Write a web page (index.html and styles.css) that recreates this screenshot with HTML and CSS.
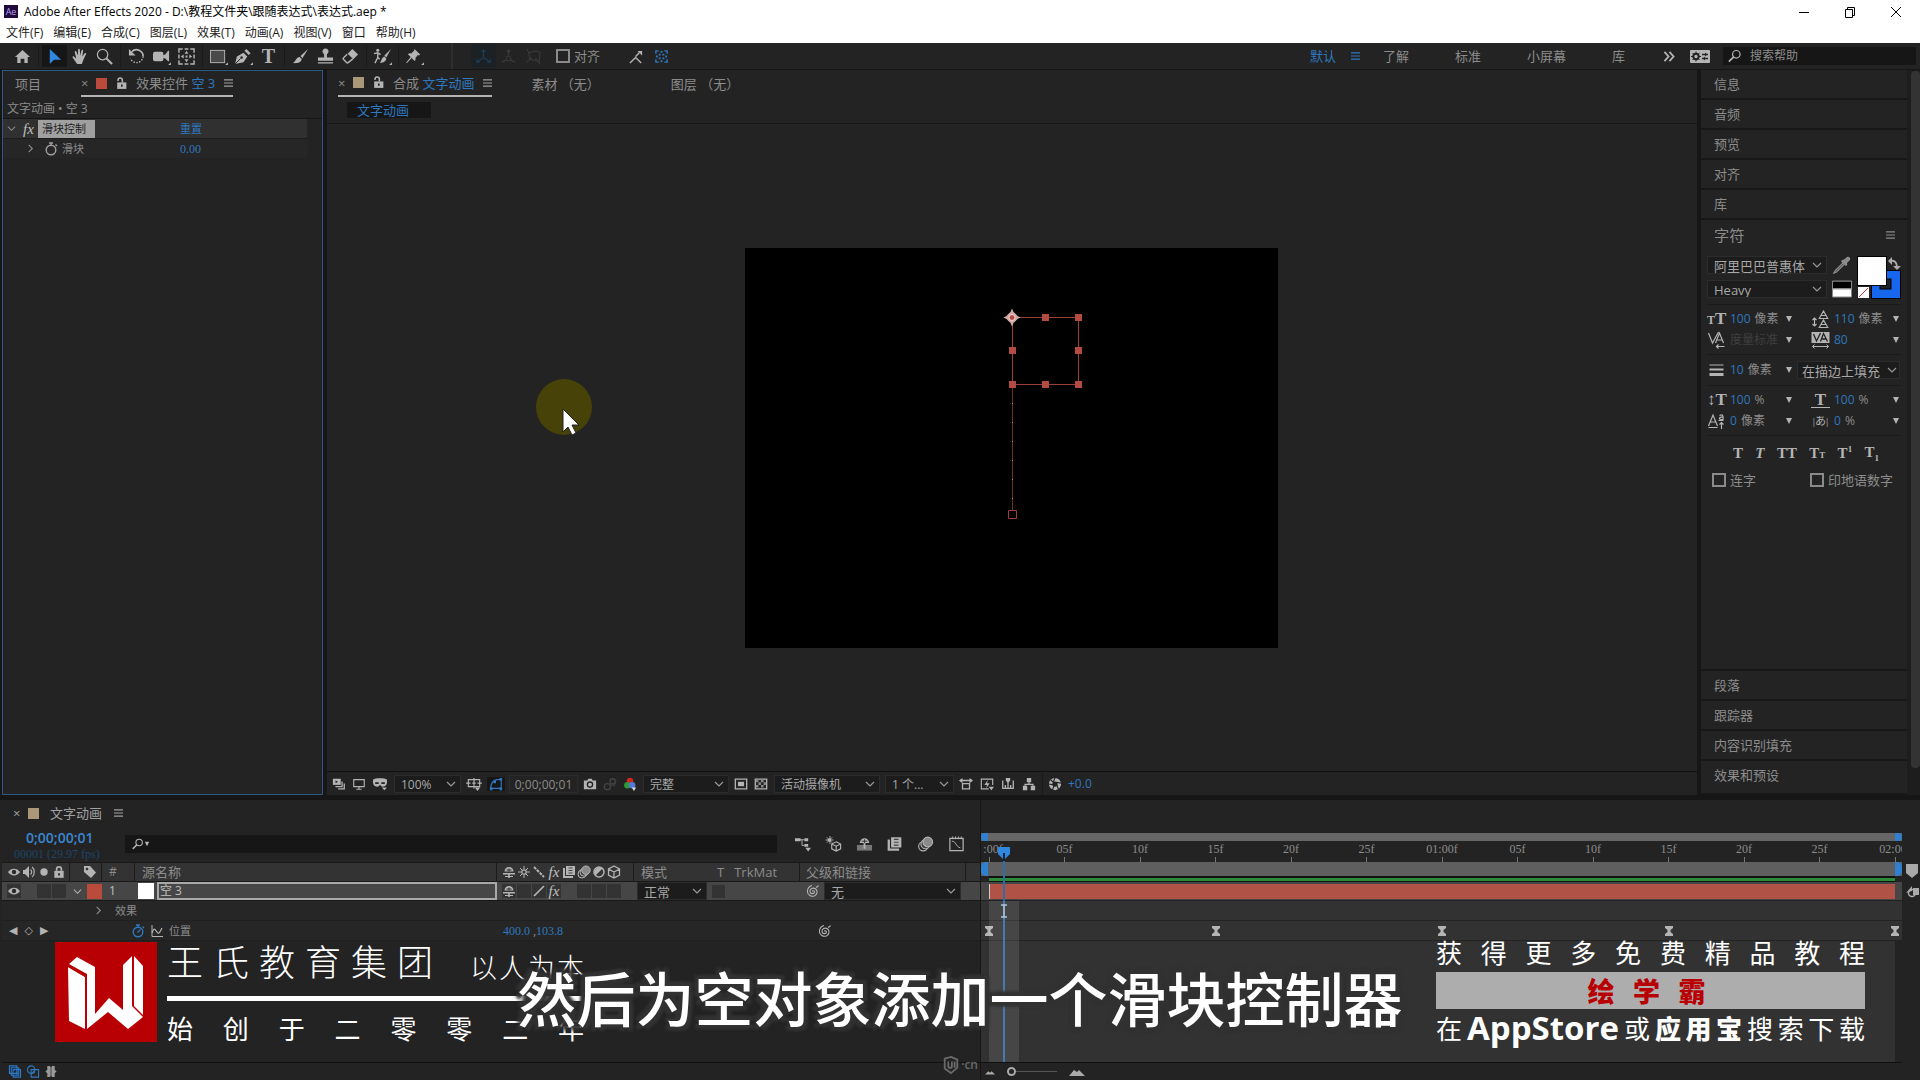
FILE: index.html
```html
<!DOCTYPE html>
<html lang="zh-CN">
<head>
    <meta charset="UTF-8">
    <meta name="viewport" content="width=device-width, initial-scale=1.0">
    <title>Adobe After Effects 2020</title>
    <link rel="stylesheet" href="styles.css">
</head>
<body>

    <!-- 图标库 -->
    <svg class="defs" width="0" height="0" aria-hidden="true">
        <symbol id="i-home" viewBox="0 0 18 18"><path d="M9 2L1 9.500h2.500V16H7v-4.500h4V16h3.500V9.500H17z" fill="currentColor"/></symbol>
        <symbol id="i-arrow" viewBox="0 0 18 18"><path d="M4 1v16l4.500-4.500H16z" fill="currentColor"/></symbol>
        <symbol id="i-hand" viewBox="0 0 18 18"><path d="M6.500 17L2 10.500c-1-1.500.2-2.300 1.300-1.300L5.500 11 4 4.500c-.3-1.500 1.400-1.800 1.800-.4L7.300 8 7.500 2c0-1.500 1.800-1.500 1.900 0l.3 6 1.300-5.200c.4-1.400 2.100-1 1.800.4L12 9l2.300-3.300c.9-1.100 2.300-.2 1.600 1l-3 6.300c-.5 1.500-1 2.500-1.400 4z" fill="currentColor"/></symbol>
        <symbol id="i-zoom" viewBox="0 0 18 18"><circle cx="7" cy="7" r="5.500" fill="none" stroke="currentColor" stroke-width="1.300"/><path d="M11 11l6 6" stroke="currentColor" stroke-width="2.200"/></symbol>
        <symbol id="i-rotate" viewBox="0 0 18 18"><path d="M4 4a7 7 0 0 1 12 5" fill="none" stroke="currentColor" stroke-width="1.800"/><path d="M16 9A7 7 0 0 1 2.500 11" fill="none" stroke="currentColor" stroke-width="1.400" stroke-dasharray="1.500 1.500"/><path d="M1 1v7h7z" fill="currentColor"/></symbol>
        <symbol id="i-video" viewBox="0 0 20 18"><rect x="1" y="4" width="11" height="10" rx="2" fill="currentColor"/><path d="M11 8l3-1 3-4h1v11h-1l-3-3-3-1zM17 18h3v-3z" fill="currentColor"/></symbol>
        <symbol id="i-panbehind" viewBox="0 0 18 18"><path d="M1 5V1h4M7 1h4M13 1h4v4M17 7v4M17 13v4h-4M11 17H7M5 17H1v-4M1 11V7" fill="none" stroke="currentColor" stroke-width="1.500"/><path d="M9 3l2 3H7zM9 15l2-3H7zM3 9l3-2v4zM15 9l-3-2v4zM8 8h2v2H8z" fill="currentColor"/></symbol>
        <symbol id="i-rect" viewBox="0 0 20 18"><rect x="1.500" y="2.500" width="15" height="13" fill="#4a4a4a" stroke="currentColor"/><path d="M17 18h3v-3z" fill="currentColor"/></symbol>
        <symbol id="i-pen" viewBox="0 0 20 18"><path d="M1 17L3 9l7-4 4 4-4 6zM11 3l2-2 4.500 4.500-2 2zM17 18h3v-3z" fill="currentColor"/><path d="M1 17l6-6" stroke="#232323"/><circle cx="8" cy="10" r="1.300" fill="#232323"/></symbol>
        <symbol id="i-brush" viewBox="0 0 18 18"><path d="M17 1L9 8.500l2 2.300zM8 9.500l2.200 2.200C10 15.500 5 16.500 1 16c2.500-1 3-6 7-6.500z" fill="currentColor"/></symbol>
        <symbol id="i-stamp" viewBox="0 0 18 18"><path d="M7.500 10V6.500a3.200 3.200 0 1 1 3 0V10H17v3.500H1V10zM1 15h16v1.500H1z" fill="currentColor"/></symbol>
        <symbol id="i-eraser" viewBox="0 0 18 18"><path d="M11 1l6 6-5 5-6-6z" fill="currentColor"/><path d="M5.500 6.500L1.500 10.500a1 1 0 0 0 0 1.500L5 15.500a1 1 0 0 0 1.500 0l5-4" fill="none" stroke="currentColor" stroke-width="1.500"/></symbol>
        <symbol id="i-roto" viewBox="0 0 20 18"><circle cx="5" cy="2.500" r="1.600" fill="currentColor"/><path d="M1 6l4-1 3 2M5 5v5l-3 6M5 10l2 2" fill="none" stroke="currentColor" stroke-width="1.500"/><path d="M19 1l-7 7 2 2zM12 9l2 2c0 3-4 5-7 4.500 2-1 2-5.500 5-6.500zM17 18h3v-3z" fill="currentColor"/></symbol>
        <symbol id="i-pin" viewBox="0 0 20 18"><path d="M10 1l6 6-1.500 1-1-.5-2.500 3c.5 1.500 0 2.500-1 3.200L7 10.500 2 16l-1-.5 5-6L3 6.500c1-1 2-1.200 3.500-.8l3-2.700zM17 18h3v-3z" fill="currentColor"/></symbol>
        <symbol id="i-axis" viewBox="0 0 18 18"><path d="M9 2v8M9 10l-7 5M9 10l7 5M7 4l2-2 2 2M2 12v3h3M16 12v3h-3" fill="none" stroke="currentColor" stroke-width="1.400"/></symbol>
        <symbol id="i-axis2" viewBox="0 0 18 18"><circle cx="9" cy="11" r="2.500" fill="none" stroke="currentColor"/><path d="M9 2v6M7 12.500L2 15M11 12.500l5 2.500M7 4l2-2 2 2" fill="none" stroke="currentColor" stroke-width="1.400"/></symbol>
        <symbol id="i-axis3" viewBox="0 0 18 18"><path d="M4 5l8-2 4 2-1 9-10-2zM2 1l2 4M16 17l-5-6M2 15l5-5" fill="none" stroke="currentColor" stroke-width="1.200"/></symbol>
        <symbol id="i-snap" viewBox="0 0 16 16"><path d="M1 15l6-6 6 6M7 8l4-4" fill="none" stroke="currentColor" stroke-width="1.500"/><path d="M9 2h5v5z" fill="currentColor"/></symbol>
        <symbol id="i-snapbox" viewBox="0 0 16 16"><path d="M2 5V2h3M11 2h3v3M14 11v3h-3M5 14H2v-3" fill="none" stroke="currentColor" stroke-width="1.500"/><path d="M7 2h2v2H7zM7 12h2v2H7zM2 7h2v2H2zM12 7h2v2h-2zM5 5h2v2H5zM9 5h2v2H9zM5 9h2v2H5zM9 9h2v2H9z" fill="currentColor"/></symbol>
        <symbol id="i-search" viewBox="0 0 16 16"><circle cx="9.500" cy="6" r="4.300" fill="none" stroke="currentColor" stroke-width="1.400"/><path d="M6.500 9L1 14.500" stroke="currentColor" stroke-width="2"/></symbol>
        <symbol id="i-menu" viewBox="0 0 10 10"><path d="M0 1.500h10M0 5h10M0 8.500h10" stroke="currentColor" stroke-width="1.300"/></symbol>
        <symbol id="i-lock" viewBox="0 0 12 12"><rect x="2" y="5" width="8" height="6" fill="currentColor"/><path d="M4 5V3.500a2 2 0 0 1 4 0V5" fill="none" stroke="currentColor" stroke-width="1.500"/><path d="M6 7v2" stroke="#232323" stroke-width="1.500"/></symbol>
        <symbol id="i-unlock" viewBox="0 0 12 12"><rect x="2" y="5" width="8.500" height="6" fill="currentColor"/><path d="M2.800 3.800V3a2 2 0 0 1 4 0v2" fill="none" stroke="currentColor" stroke-width="1.400"/><path d="M6.300 7v2" stroke="#232323" stroke-width="1.500"/></symbol>
        <symbol id="i-down" viewBox="0 0 10 10"><path d="M1 3l4 4 4-4" fill="none" stroke="currentColor" stroke-width="1.200"/></symbol>
        <symbol id="i-right" viewBox="0 0 10 10"><path d="M3 1l4 4-4 4" fill="none" stroke="currentColor" stroke-width="1.200"/></symbol>
        <symbol id="i-tri" viewBox="0 0 8 8"><path d="M1 1h6L4 7z" fill="currentColor"/></symbol>
        <symbol id="i-watch" viewBox="0 0 14 14"><circle cx="7" cy="8" r="4.800" fill="none" stroke="currentColor" stroke-width="1.400"/><path d="M5 1h4M7 1v2M11.500 2.500l1.500 1.500" stroke="currentColor" stroke-width="1.300"/></symbol>
        <symbol id="i-watch-on" viewBox="0 0 14 14"><circle cx="7" cy="8" r="4.800" fill="none" stroke="currentColor" stroke-width="1.400"/><path d="M5 1h4M7 1v2M11.500 2.500l1.500 1.500M6.500 8.500L9.500 5.500" stroke="currentColor" stroke-width="1.300"/></symbol>
        <symbol id="i-graph" viewBox="0 0 14 14"><path d="M2 1v11.500h11" fill="none" stroke="currentColor"/><path d="M2 9c2-6 3-4 5-1s3 0 5-4" fill="none" stroke="currentColor" stroke-width="1.200"/></symbol>
        <symbol id="i-spiral" viewBox="0 0 14 14"><path d="M6.500 7.500c0-1.300 2.200-1 2 .6-.3 2-4 2.200-4.500-.3-.4-3 3-4.600 5.500-3 2.600 1.800 1.800 6-1.200 7.200-3 1-6.500-.8-6.900-4.300C1.200 4.700 3.300 2 6 1.500M10 3.500c1-.5 2-1 2.500-2" fill="none" stroke="currentColor" stroke-width="1.100"/></symbol>
        <symbol id="i-eye" viewBox="0 0 14 14"><path d="M1 7c3-4.500 9-4.500 12 0-3 4.500-9 4.500-12 0z" fill="currentColor"/><circle cx="7" cy="7" r="2.200" fill="#2a2a2a"/></symbol>
        <symbol id="i-speaker" viewBox="0 0 14 14"><path d="M1 5h2l4-4v12L3 9H1z" fill="currentColor"/><path d="M8.500 4.500c1.500 1 1.500 4 0 5M10 2c3 2 3 8 0 10" fill="none" stroke="currentColor" stroke-width="1.200"/></symbol>
        <symbol id="i-dot" viewBox="0 0 14 14"><circle cx="7" cy="7" r="3.700" fill="currentColor"/></symbol>
        <symbol id="i-tag" viewBox="0 0 14 14"><path d="M1 1h6l6 6.500L8 13 1 7z" fill="currentColor"/><circle cx="4" cy="4" r="1.300" fill="#333"/></symbol>
        <symbol id="i-shy" viewBox="0 0 14 14"><path d="M2.500 6.500a4.500 4.500 0 0 1 9 0zM1 8h12v1.500H1zM6.200 8h1.600v5H6.200zM3 11h8v1H3z" fill="currentColor"/><path d="M7 3.500v3M4.500 5h5" stroke="#333"/></symbol>
        <symbol id="i-sun" viewBox="0 0 14 14"><circle cx="7" cy="7" r="2.200" fill="none" stroke="currentColor" stroke-width="1.300"/><path d="M7 1v3M7 10v3M1 7h3M10 7h3M3 3l2 2M9 9l2 2M3 11l2-2M9 5l2-2" stroke="currentColor"/></symbol>
        <symbol id="i-back" viewBox="0 0 14 14"><path d="M2 2l10 10" stroke="currentColor" stroke-width="2" stroke-dasharray="3 1"/></symbol>
        <symbol id="i-slash" viewBox="0 0 14 14"><path d="M12 2L2 12" stroke="currentColor" stroke-width="1.700"/></symbol>
        <symbol id="i-film" viewBox="0 0 14 14"><path d="M1 3h2v8h8v2H1zM4 1h9v9H4z" fill="currentColor"/><path d="M6.500 3h4M6.500 5.500h4M6.500 8h4" stroke="#444"/></symbol>
        <symbol id="i-blur" viewBox="0 0 14 14"><circle cx="5" cy="9" r="4" fill="none" stroke="currentColor"/><circle cx="7" cy="7.200" r="4" fill="#444" stroke="currentColor"/><circle cx="9" cy="5.200" r="4.200" fill="#8a8a8a" stroke="currentColor"/></symbol>
        <symbol id="i-adj" viewBox="0 0 14 14"><circle cx="7" cy="7" r="5" fill="none" stroke="currentColor" stroke-width="1.500"/><path d="M3.500 10.500l7-7A5 5 0 0 0 3.500 10.500z" fill="currentColor"/></symbol>
        <symbol id="i-cube" viewBox="0 0 14 14"><path d="M7 1l5.500 3v6L7 13l-5.500-3V4zM1.500 4L7 7l5.500-3M7 7v6" fill="none" stroke="currentColor" stroke-width="1.300"/></symbol>
        <symbol id="i-flow" viewBox="0 0 18 16"><path d="M1 2h6v3H1zM11 2h4v3h-4zM11 8h4v3h-4zM12 12h6l-3 4z" fill="currentColor"/><path d="M6 3.500h5M8.500 3.500v6H11" fill="none" stroke="currentColor"/></symbol>
        <symbol id="i-draft" viewBox="0 0 18 18"><path d="M5 0v9M0 4.500h9M1.500 1.500l6 6M7.500 1.500l-6 6" stroke="currentColor"/><circle cx="4.500" cy="4.500" r="2" fill="currentColor"/><path d="M12 6.500l5 2.500v5.500L12 17l-5-2.500V9zM7 9l5 2.500L17 9M12 11.500V17" fill="none" stroke="currentColor" stroke-width="1.300"/></symbol>
        <symbol id="i-shybig" viewBox="0 0 18 16"><path d="M4 7a5 5 0 0 1 10 0z" fill="currentColor"/><path d="M1 9h16v6H1z" fill="#777"/><path d="M8 7h2v6H8z" fill="currentColor"/><path d="M9 3v4M6 5h6" stroke="#333"/></symbol>
        <symbol id="i-grapheditor" viewBox="0 0 18 16"><path d="M2 2h14v13H2z" fill="none" stroke="currentColor" stroke-width="1.300"/><path d="M5 0v3M8 0v3M11 0v3M14 0v3M4 5c5 0 4 6 9 7" fill="none" stroke="currentColor"/></symbol>
        <symbol id="i-stack" viewBox="0 0 16 16"><path d="M1 2h9v7H1z" fill="currentColor"/><path d="M4 4l3 1.500L4 7z" fill="#232323"/><path d="M11.500 5v6H4M14 7.500v6H7" fill="none" stroke="currentColor" stroke-width="1.500"/></symbol>
        <symbol id="i-monitor" viewBox="0 0 16 16"><path d="M2 3h12v8H2zM8 11v3M5 14h6" fill="none" stroke="currentColor" stroke-width="1.300"/></symbol>
        <symbol id="i-mask" viewBox="0 0 18 16"><path d="M1 3c3-2 13-2 16 0v3c0 3-2 5-4.500 5C10 11 10 9 9 9s-1 2-3.500 2C3 11 1 9 1 6zM11 12h6l-3 3z" fill="currentColor"/><path d="M3.500 6h4v2h-4zM10.500 6h4v2h-4z" fill="#232323"/></symbol>
        <symbol id="i-grid" viewBox="0 0 18 16"><path d="M2.500 3h13v8h-13zM9 1v4M9 9v4M0 7h5M13 7h5M7 7h4M9 5v4" fill="none" stroke="currentColor" stroke-width="1.300"/><path d="M10 12h6l-3 4z" fill="currentColor"/></symbol>
        <symbol id="i-maskpath" viewBox="0 0 16 16"><path d="M2 13c0-5 2-9 7-10h5v10z" fill="none" stroke="currentColor" stroke-width="1.300"/><path d="M1 12h3v3H1zM12 12h3v3h-3zM12 1h3v3h-3zM5 4h3v3H5z" fill="currentColor"/></symbol>
        <symbol id="i-camera" viewBox="0 0 16 16"><path d="M1 4h4l1-2h4l1 2h4v10H1z" fill="currentColor"/><circle cx="8" cy="8.700" r="3" fill="none" stroke="#232323" stroke-width="1.500"/></symbol>
        <symbol id="i-show" viewBox="0 0 16 16"><circle cx="5" cy="11" r="3.500" fill="none" stroke="currentColor" stroke-width="1.500"/><circle cx="11" cy="5" r="3" fill="none" stroke="currentColor" stroke-width="1.500"/><path d="M8 9l5 1 2-6" fill="none" stroke="currentColor"/></symbol>
        <symbol id="i-rgb" viewBox="0 0 16 16"><circle cx="8" cy="4.500" r="3.700" fill="#d0281c"/><circle cx="5" cy="9.500" r="3.700" fill="#2f9a3a"/><circle cx="10.500" cy="9.500" r="3.700" fill="#5578d8"/><path d="M10 12h5l-2.500 4z" fill="#ddd"/></symbol>
        <symbol id="i-roi" viewBox="0 0 16 16"><path d="M1.500 2.500h13v11h-13z" fill="none" stroke="currentColor" stroke-width="1.500"/><path d="M4.500 5.500h7v5h-7z" fill="currentColor"/></symbol>
        <symbol id="i-checker" viewBox="0 0 16 16"><path d="M1.500 2.500h13v11h-13z" fill="none" stroke="currentColor" stroke-width="1.500"/><path d="M2 3h3v3H2zM8 3h3v3H8zM5 6h3v3H5zM11 6h3v3h-3zM2 9h3v3H2zM8 9h3v3H8z" fill="#888"/></symbol>
        <symbol id="i-aspect" viewBox="0 0 16 16"><path d="M1 4h14M4 7.500h8v6H4z" fill="none" stroke="currentColor" stroke-width="1.500"/><path d="M0 4l4-3v6zM16 4l-4-3v6z" fill="currentColor"/></symbol>
        <symbol id="i-fast" viewBox="0 0 16 16"><path d="M10 13.500H1.500v-11h13V9" fill="none" stroke="currentColor" stroke-width="1.300"/><path d="M9 3L5 9h3l-1 4 4-6H8zM10 11h6l-3 4z" fill="currentColor"/></symbol>
        <symbol id="i-tlbtn" viewBox="0 0 16 16"><path d="M2 4v9h12V4M5 13V9M11 13V9M8 13V6" fill="none" stroke="currentColor" stroke-width="1.500"/><path d="M5.500 1h5v3L8 7 5.500 4z" fill="currentColor"/></symbol>
        <symbol id="i-flowchart" viewBox="0 0 16 16"><path d="M5.500 1h5v5h-5zM1 10h5v5H1zM10 10h5v5h-5z" fill="currentColor"/><path d="M8 6v2.500M3.500 10V8.500h9V10" fill="none" stroke="currentColor" stroke-width="1.500"/></symbol>
        <symbol id="i-aperture" viewBox="0 0 16 16"><circle cx="8" cy="8" r="5" fill="none" stroke="currentColor" stroke-width="4"/><path d="M8 1l-2 5M15 7l-6-1M12 14l-2-5M5 15l2-5M1 8l5 1M3 3l3 3" stroke="#232323" stroke-width="1.300"/></symbol>
        <symbol id="i-dropper" viewBox="0 0 18 18"><path d="M11 6l-8.500 8.500L1 17l2.500-1L12 7.500" fill="none" stroke="currentColor" stroke-width="1.300"/><path d="M9 4l2-.5L14 1c2-1 4 1 3 3l-3 3 .3 2-1.500 1L8 5.500z" fill="currentColor"/></symbol>
        <symbol id="i-keyframe" viewBox="0 0 10 10"><path d="M1 0h8v2L6.500 4v2L9 8v2H1V8l2.500-2V4L1 2z" fill="#b4b4b4"/></symbol>
        <symbol id="i-layers" viewBox="0 0 14 14"><path d="M1 1h8v8H1zM3 3h8v8H3zM5 5h8v8H5z" fill="#16263a" stroke="currentColor" stroke-width="1.200"/><path d="M9 7v4M7 9h4" stroke="currentColor"/></symbol>
        <symbol id="i-modes" viewBox="0 0 14 14"><circle cx="5" cy="5" r="4" fill="none" stroke="currentColor" stroke-width="1.200"/><path d="M5 5h8v8H5z" fill="none" stroke="currentColor" stroke-width="1.200"/><path d="M9 5v4H5z" fill="currentColor"/></symbol>
        <symbol id="i-brackets" viewBox="0 0 14 14"><path d="M6 1H3v4L1 7l2 2v4h3zM8 1h3v4l2 2-2 2v4H8z" fill="currentColor"/><path d="M7 2v10" stroke="#777" stroke-width="2"/></symbol>
    </svg>

    <header class="titlebar">
        <span class="app-logo">Ae</span>
        <span class="app-title">Adobe After Effects 2020 - D:\教程文件夹\跟随表达式\表达式.aep *</span>
        <div class="win-buttons">
            <button type="button" aria-label="最小化"><svg viewBox="0 0 12 12"><path d="M1 6.500h10" stroke="#000"/></svg></button>
            <button type="button" aria-label="还原"><svg viewBox="0 0 12 12"><path d="M1.500 3.500h7v8h-7zM3.500 3.500v-2h7v8h-2" fill="none" stroke="#000"/></svg></button>
            <button type="button" aria-label="关闭"><svg viewBox="0 0 12 12"><path d="M1 1l10 10M11 1L1 11" stroke="#000"/></svg></button>
        </div>
    </header>

    <nav class="menubar">
        <a href="#">文件(F)</a><a href="#">编辑(E)</a><a href="#">合成(C)</a><a href="#">图层(L)</a><a href="#">效果(T)</a><a href="#">动画(A)</a><a href="#">视图(V)</a><a href="#">窗口</a><a href="#">帮助(H)</a>
    </nav>

    <!-- 工具栏 -->
    <div class="toolbar">
        <button type="button" class="tool" aria-label="主页"><svg><use href="#i-home"/></svg></button>
        <i class="sep"></i>
        <button type="button" class="tool active" aria-label="选取"><svg><use href="#i-arrow"/></svg></button>
        <button type="button" class="tool" aria-label="手形"><svg><use href="#i-hand"/></svg></button>
        <button type="button" class="tool" aria-label="缩放"><svg><use href="#i-zoom"/></svg></button>
        <i class="sep"></i>
        <button type="button" class="tool" aria-label="旋转"><svg><use href="#i-rotate"/></svg></button>
        <button type="button" class="tool" aria-label="摄像机"><svg><use href="#i-video"/></svg></button>
        <button type="button" class="tool" aria-label="锚点"><svg><use href="#i-panbehind"/></svg></button>
        <i class="sep"></i>
        <button type="button" class="tool" aria-label="矩形"><svg><use href="#i-rect"/></svg></button>
        <button type="button" class="tool" aria-label="钢笔"><svg><use href="#i-pen"/></svg></button>
        <button type="button" class="tool type-tool" aria-label="文字">T</button>
        <i class="sep"></i>
        <button type="button" class="tool" aria-label="画笔"><svg><use href="#i-brush"/></svg></button>
        <button type="button" class="tool" aria-label="仿制图章"><svg><use href="#i-stamp"/></svg></button>
        <button type="button" class="tool" aria-label="橡皮擦"><svg><use href="#i-eraser"/></svg></button>
        <i class="sep"></i>
        <button type="button" class="tool" aria-label="Roto 笔刷"><svg><use href="#i-roto"/></svg></button>
        <i class="sep"></i>
        <button type="button" class="tool" aria-label="人偶位置控点"><svg><use href="#i-pin"/></svg></button>
        <div class="axis-tools">
            <button type="button" class="tool on" aria-label="本地轴" disabled><svg><use href="#i-axis"/></svg></button>
            <button type="button" class="tool" aria-label="世界轴" disabled><svg><use href="#i-axis2"/></svg></button>
            <button type="button" class="tool" aria-label="视图轴" disabled><svg><use href="#i-axis3"/></svg></button>
        </div>
        <label class="check snap"><input type="checkbox">对齐</label>
        <button type="button" class="tool small" aria-label="对齐边缘"><svg><use href="#i-snap"/></svg></button>
        <button type="button" class="tool small blue" aria-label="对齐特征"><svg><use href="#i-snapbox"/></svg></button>

        <div class="workspaces">
            <a href="#" class="current">默认 <svg class="menu-icon"><use href="#i-menu"/></svg></a>
            <a href="#">了解</a>
            <a href="#">标准</a>
            <a href="#">小屏幕</a>
            <a href="#">库</a>
        </div>
        <button type="button" class="more" aria-label="更多"><svg viewBox="0 0 12 12"><path d="M1 1l4.500 5L1 11M6.500 1L11 6l-4.500 5" fill="none" stroke="currentColor" stroke-width="2"/></svg></button>
        <button type="button" class="sync" aria-label="同步设置"><svg viewBox="0 0 20 13"><rect width="20" height="13" rx="1" fill="#b4b4b4"/><circle cx="6" cy="6.500" r="2.700" fill="none" stroke="#232323" stroke-width="2"/><path d="M6 1.500v10M1 6.500h10M2.500 3l7 7M9.500 3l-7 7" stroke="#232323" stroke-dasharray="2 6"/><path d="M12 4.500h6M12 8.500h6" stroke="#232323" stroke-width="1.500"/><path d="M13 8.500l2-2v4zM17 4.500l-2-2v4z" fill="#232323"/></svg></button>
        <label class="help-search"><svg><use href="#i-search"/></svg><input type="text" placeholder="搜索帮助" aria-label="搜索帮助"></label>
    </div>

    <main class="workspace">

        <!-- 效果控件 -->
        <section class="panel effects">
            <div class="tabs">
                <a href="#" class="tab project-tab">项目</a>
                <div class="tab current">
                    <span class="close">×</span><i class="swatch red"></i><svg class="lock"><use href="#i-unlock"/></svg>
                    <span>效果控件 <b>空 3</b></span><svg class="menu-icon"><use href="#i-menu"/></svg>
                </div>
            </div>
            <p class="crumb">文字动画 • 空 3</p>
            <div class="effect-row head">
                <svg class="tw"><use href="#i-down"/></svg><span class="fx">fx</span><span class="effect-name">滑块控制</span>
                <button type="button" class="value">重置</button>
            </div>
            <div class="effect-row prop">
                <svg class="tw"><use href="#i-right"/></svg><svg class="watch"><use href="#i-watch"/></svg><span>滑块</span>
                <button type="button" class="value">0.00</button>
            </div>
        </section>

        <!-- 合成查看器 -->
        <section class="panel viewer">
            <div class="tabs">
                <div class="tab current">
                    <span class="close">×</span><i class="swatch tan"></i><svg class="lock"><use href="#i-unlock"/></svg>
                    <span>合成 <b>文字动画</b></span><svg class="menu-icon"><use href="#i-menu"/></svg>
                </div>
                <a href="#" class="tab">素材 （无）</a>
                <a href="#" class="tab">图层 （无）</a>
            </div>
            <div class="comp-path"><a href="#">文字动画</a></div>
            <div class="stage">
                <svg class="comp" viewBox="0 0 533 400">
                    <rect width="533" height="400" fill="#000"/>
                    <g fill="none" stroke="#9c4038">
                        <path d="M267.500 69.500h66v67h-66z"/>
                        <path d="M267.500 136v126" stroke="#6e2f2a"/>
                        <path d="M263.500 262.500h8v8h-8z"/>
                    </g>
                    <path d="M267.500 136v130" stroke="#b09090" stroke-dasharray="1 18"/>
                    <g fill="#b34b41">
                        <path d="M297 66h7v7h-7zM330 66h7v7h-7zM264 99h7v7h-7zM330 99h7v7h-7zM264 133h7v7h-7zM297 133h7v7h-7zM330 133h7v7h-7z"/>
                    </g>
                    <path d="M267 60.500l1.500 3.500 4 4 3 1.500-3 1.500-4 4-1.500 3.500-1.500-3.500-4-4-3-1.500 3-1.500 4-4z" fill="#d0a8a4"/>
                    <circle cx="267" cy="69.500" r="5" fill="#d0a8a4"/>
                    <circle cx="267" cy="69.500" r="3" fill="#b34b41" stroke="#f0dcda"/>
                </svg>
                <svg class="cursor" viewBox="0 0 60 60">
                    <circle cx="31" cy="31" r="28" fill="#464208"/>
                    <path d="M30 33v23l5-5 4 8 4-2-4-8h7z" fill="#fff" stroke="#222"/>
                </svg>
            </div>
            <div class="viewer-bar">
                <svg><use href="#i-stack"/></svg>
                <svg><use href="#i-monitor"/></svg>
                <svg class="wide"><use href="#i-mask"/></svg>
                <select class="s-zoom" aria-label="放大率"><option>100%</option></select>
                <svg class="wide"><use href="#i-grid"/></svg>
                <svg class="wide blue"><use href="#i-maskpath"/></svg>
                <button type="button" class="timecode">0;00;00;01</button>
                <svg><use href="#i-camera"/></svg>
                <svg class="dim"><use href="#i-show"/></svg>
                <svg><use href="#i-rgb"/></svg>
                <select class="s-res" aria-label="分辨率"><option>完整</option></select>
                <svg><use href="#i-roi"/></svg>
                <svg><use href="#i-checker"/></svg>
                <select class="s-cam" aria-label="视图"><option>活动摄像机</option></select>
                <select class="s-view" aria-label="视图布局"><option>1 个...</option></select>
                <svg><use href="#i-aspect"/></svg>
                <svg><use href="#i-fast"/></svg>
                <svg><use href="#i-tlbtn"/></svg>
                <svg><use href="#i-flowchart"/></svg>
                <i class="sep"></i>
                <svg><use href="#i-aperture"/></svg>
                <button type="button" class="value">+0.0</button>
            </div>
        </section>

        <!-- 右侧面板 -->
        <aside class="side">
            <div class="side-list">
                <a href="#" class="side-item">信息</a>
                <a href="#" class="side-item">音频</a>
                <a href="#" class="side-item">预览</a>
                <a href="#" class="side-item">对齐</a>
                <a href="#" class="side-item">库</a>
                <div class="character">
                    <h3>字符 <svg class="menu-icon"><use href="#i-menu"/></svg></h3>
                    <div class="font-row">
                        <div class="font-selects">
                            <select aria-label="字体"><option>阿里巴巴普惠体</option></select>
                            <select aria-label="字体样式"><option>Heavy</option></select>
                        </div>
                        <div class="font-icons">
                            <svg><use href="#i-dropper"/></svg>
                            <svg viewBox="0 0 20 17"><path d="M.5.500h19v16H.5z" fill="#fff" stroke="#888"/><path d="M1 1h18v7H1z"/><path d="M0 8.500h20" stroke="#999"/></svg>
                        </div>
                        <svg class="colors" viewBox="0 0 44 43">
                            <rect x="14.500" y="14.500" width="29" height="28" fill="#1766ee" stroke="#000"/>
                            <rect x="23" y="23" width="11" height="10" fill="#222" stroke="#000"/>
                            <rect x=".5" y=".5" width="29" height="29" fill="#fff" stroke="#000"/>
                            <rect x="1" y="31" width="11" height="11" fill="#fff"/>
                            <path d="M2 41l9-9" stroke="#e04040"/>
                            <path d="M33 5c4-1 7 1 7 6" fill="none" stroke="#aaa" stroke-width="2"/><path d="M35 1v8l-4-4zM36 10h8l-4 4z" fill="#aaa"/>
                        </svg>
                    </div>
                    <div class="char-grid">
                        <div class="field"><span class="glyph"><small>T</small>T</span><button type="button" class="value">100</button> 像素<svg class="tri"><use href="#i-tri"/></svg></div>
                        <div class="field"><svg class="pic" viewBox="0 0 18 18"><path d="M3 8v8M1 10l2-2 2 2M1 14l2 2 2-2M7 8.500h10M7 17.500h10M8 8l4-7 4 7M9.500 5.500h5M8 17l4-7 4 7M9.500 14.500h5" fill="none" stroke="currentColor" stroke-width="1.200"/></svg><button type="button" class="value">110</button> 像素<svg class="tri"><use href="#i-tri"/></svg></div>
                        <div class="field"><svg class="pic" viewBox="0 0 18 18"><path d="M1 2l4 10 6-11M8 12l4-10 4 10M9.500 9h5M9 15.500h8M11 13.500l-2 2 2 2" fill="none" stroke="currentColor" stroke-width="1.200"/></svg><span class="off">度量标准</span><svg class="tri"><use href="#i-tri"/></svg></div>
                        <div class="field"><svg class="pic" viewBox="0 0 18 18"><path d="M0 1h18v11H0z" fill="currentColor"/><path d="M2 3l3 7 4-8M9 10.500l3-8 4 8M10.500 8h4" fill="none" stroke="#222" stroke-width="1.300"/><path d="M1 15.500h16M3 13.500l-2 2 2 2M15 13.500l2 2-2 2" fill="none" stroke="currentColor"/></svg><button type="button" class="value">80</button><svg class="tri"><use href="#i-tri"/></svg></div>
                    </div>
                    <div class="char-grid stroke">
                        <div class="field"><svg class="pic" viewBox="0 0 18 18"><path d="M2 4h14" stroke="currentColor"/><path d="M2 8.500h14" stroke="currentColor" stroke-width="2"/><path d="M2 13.500h14" stroke="currentColor" stroke-width="3"/></svg><button type="button" class="value">10</button> 像素<svg class="tri"><use href="#i-tri"/></svg></div>
                        <select aria-label="描边方式"><option>在描边上填充</option></select>
                    </div>
                    <div class="char-grid">
                        <div class="field"><span class="glyph">↕T</span><button type="button" class="value">100</button> %<svg class="tri"><use href="#i-tri"/></svg></div>
                        <div class="field"><span class="glyph under">T</span><button type="button" class="value">100</button> %<svg class="tri"><use href="#i-tri"/></svg></div>
                        <div class="field"><svg class="pic" viewBox="0 0 18 18"><path d="M1 14L5.500 3 10 14M2.500 10h6M1 15.500h9M11 8.500h5M14 17v-6M12 12.500l2-2 2 2M12 3.500c3-1.500 4 0 3.500 4-3 .5-4-.5-3.500-1.500s2-1 3.500-.8" fill="none" stroke="currentColor" stroke-width="1.200"/></svg><button type="button" class="value">0</button> 像素<svg class="tri"><use href="#i-tri"/></svg></div>
                        <div class="field"><span class="glyph tsume">|あ|</span><button type="button" class="value">0</button> %<svg class="tri"><use href="#i-tri"/></svg></div>
                    </div>
                    <div class="faux">
                        <button type="button"><b>T</b></button><button type="button"><em>T</em></button><button type="button">TT</button><button type="button">T<small>T</small></button><button type="button">T<sup>1</sup></button><button type="button">T<sub>1</sub></button>
                    </div>
                    <div class="char-checks">
                        <label class="check"><input type="checkbox">连字</label>
                        <label class="check"><input type="checkbox">印地语数字</label>
                    </div>
                </div>
                <a href="#" class="side-item">段落</a>
                <a href="#" class="side-item">跟踪器</a>
                <a href="#" class="side-item">内容识别填充</a>
                <a href="#" class="side-item">效果和预设</a>
            </div>
            <div class="scrollbar"><i></i></div>
        </aside>
    </main>

    <!-- 时间轴 -->
    <section class="timeline">
        <div class="layers">
            <div class="tl-tab">
                <span class="close">×</span><i class="swatch tan"></i><span>文字动画</span><svg class="menu-icon"><use href="#i-menu"/></svg>
            </div>
            <div class="tl-top">
                <div class="now"><strong>0;00;00;01</strong><span>00001 (29.97 fps)</span></div>
                <label class="tl-search"><svg><use href="#i-search"/></svg><svg class="tri"><use href="#i-tri"/></svg><input type="text" aria-label="搜索图层"></label>
                <div class="tl-buttons">
                    <svg><use href="#i-flow"/></svg>
                    <svg><use href="#i-draft"/></svg>
                    <svg><use href="#i-shybig"/></svg>
                    <svg><use href="#i-film"/></svg>
                    <svg><use href="#i-blur"/></svg>
                    <svg><use href="#i-grapheditor"/></svg>
                </div>
            </div>
            <div class="row head">
                <div class="av"><svg><use href="#i-eye"/></svg><svg><use href="#i-speaker"/></svg><svg><use href="#i-dot"/></svg><svg><use href="#i-lock"/></svg></div>
                <div class="label"><svg><use href="#i-tag"/></svg></div>
                <div class="num">#</div>
                <div class="name">源名称</div>
                <div class="switches"><svg><use href="#i-shy"/></svg><svg><use href="#i-sun"/></svg><svg><use href="#i-back"/></svg><span class="fx">fx</span><svg><use href="#i-film"/></svg><svg><use href="#i-blur"/></svg><svg><use href="#i-adj"/></svg><svg><use href="#i-cube"/></svg></div>
                <div class="mode"><span>模式</span><span>T</span><span>TrkMat</span></div>
                <div class="parent">父级和链接</div>
            </div>
            <div class="row layer">
                <div class="av"><svg class="cell"><use href="#i-eye"/></svg><i></i><i class="cell"></i><i class="cell"></i></div>
                <div class="label"><svg class="tw"><use href="#i-down"/></svg><i class="swatch red"></i></div>
                <div class="num">1</div>
                <div class="name"><i class="solid"></i><input type="text" value="空 3" aria-label="图层名称"></div>
                <div class="switches"><svg class="cell"><use href="#i-shy"/></svg><i class="cell"></i><svg class="cell"><use href="#i-slash"/></svg><span class="fx cell">fx</span><i></i><i class="cell"></i><i class="cell"></i><i class="cell"></i></div>
                <div class="mode"><select aria-label="模式"><option>正常</option></select><i class="cell"></i></div>
                <div class="parent"><svg><use href="#i-spiral"/></svg><select aria-label="父级"><option>无</option></select></div>
            </div>
            <div class="row sub effect-group">
                <svg class="tw"><use href="#i-right"/></svg><span>效果</span>
            </div>
            <div class="row sub">
                <div class="keys"><span>◀</span><span>◇</span><span>▶</span></div>
                <div class="prop-name"><svg class="blue"><use href="#i-watch-on"/></svg><svg><use href="#i-graph"/></svg><span>位置</span></div>
                <div class="position"><button type="button" class="value">400.0</button> ,<button type="button" class="value">103.8</button></div>
                <div></div>
                <div class="pick"><svg><use href="#i-spiral"/></svg></div>
            </div>
            <div class="rest"></div>
            <div class="tl-bottom">
                <div class="toggles"><svg><use href="#i-layers"/></svg><svg><use href="#i-modes"/></svg><svg class="grey"><use href="#i-brackets"/></svg></div>
                <span class="site"><svg viewBox="0 0 20 20"><path d="M3 3l7-2 7 3v9l-7 6-7-5z" fill="none" stroke="currentColor" stroke-width="2"/><path d="M7 6v5c0 3 4 3 4 0V6M14 6v7" fill="none" stroke="currentColor" stroke-width="2"/></svg>·cn</span>
            </div>
        </div>

        <div class="tracks">
            <div class="navigator"><i></i><i></i></div>
            <div class="ruler">
                <div class="ticks">
                    <span>:00f</span><span>05f</span><span>10f</span><span>15f</span><span>20f</span><span>25f</span><span>01:00f</span><span>05f</span><span>10f</span><span>15f</span><span>20f</span><span>25f</span><span>02:00f</span>
                </div>
            </div>
            <div class="workarea"><i></i><i></i></div>
            <div class="cache"></div>
            <div class="track bar-track"><div class="bar"></div></div>
            <div class="track"></div>
            <div class="track keyframes">
                <svg><use href="#i-keyframe"/></svg><svg><use href="#i-keyframe"/></svg><svg><use href="#i-keyframe"/></svg><svg><use href="#i-keyframe"/></svg><svg><use href="#i-keyframe"/></svg>
            </div>
            <div class="track-rest"></div>
            <div class="zoom-bar">
                <svg viewBox="0 0 12 8"><path d="M0 7l4-4 2 2 2-2 4 4z" fill="#aaa"/></svg>
                <input type="range" min="0" max="100" value="0" aria-label="时间轴缩放">
                <svg class="big" viewBox="0 0 16 10"><path d="M0 9l5-6 3 2 2-2 6 6z" fill="#aaa"/></svg>
            </div>
            <div class="playhead">
                <svg viewBox="0 0 12 14"><path d="M0 0h12v7l-6 6-6-6z" fill="#2f87e0"/><path d="M6 6v8" stroke="#123" stroke-width="2"/></svg>
                <svg class="ibeam" viewBox="0 0 12 14"><path d="M3 1h6M6 1v12M3 13h6" fill="none" stroke="#a8c0d8" stroke-width="1.500"/></svg>
            </div>
        </div>

        <div class="gutter">
            <svg viewBox="0 0 14 16"><path d="M1 1h12v9l-6 5-6-5z" fill="#aaa"/></svg>
            <svg viewBox="0 0 14 16"><circle cx="7" cy="9" r="3.500" fill="none" stroke="#aaa" stroke-width="1.500"/><path d="M8 4h6v7H8zM1 9l6-7v5z" fill="#aaa"/></svg>
        </div>
    </section>

    <!-- 角标与字幕 -->
    <div class="brand">
        <svg class="brand-logo" viewBox="0 0 102 100">
            <rect width="102" height="100" fill="#b80004"/>
            <path d="M14 22l8-7 18 10v47l14-16 14 12V23l9-9v50l11 11-15 12-20-17-21 17V32z" fill="#fff"/>
            <path d="M13 25l17 10v52l-16-8z" fill="#fff"/>
            <path d="M13 24l18 10.500V87M78 13v50l11 11" fill="none" stroke="#b80004" stroke-width="1.500"/>
            <path d="M79 14l9 10v49l-9-9z" fill="#fff"/>
        </svg>
        <div class="brand-text">
            <div class="brand-top"><span class="brand-name">王氏教育集团</span><span class="brand-motto">以人为本</span></div>
            <p class="brand-since">始创于二零零二年</p>
        </div>
    </div>
    <p class="subtitle">然后为空对象添加一个滑块控制器</p>
    <div class="promo">
        <p>获得更多免费精品教程</p>
        <div class="promo-name"><b>绘学霸</b></div>
        <p class="promo-store"><span>在</span><b class="latin">AppStore</b><span>或</span><b>应用宝</b><span>搜索下载</span></p>
    </div>

</body>
</html>
```
FILE: styles.css
```css
* {
    box-sizing: border-box;
}

body {
    margin: 0;
    height: 100vh;
    display: flex;
    flex-direction: column;
    position: relative;
    overflow: hidden;
    background-color: #161616;
    color: #8c8c8c;
    font-family: "Open Sans", "Noto Sans CJK SC", sans-serif;
    font-size: 13px;
    line-height: 18px;
}

p, h3 {
    margin: 0;
    font-weight: normal;
}

a {
    color: inherit;
    text-decoration: none;
}

svg {
    display: block;
    flex: none;
}

.defs {
    position: absolute;
}

button, select, input {
    font: inherit;
    color: inherit;
    background: none;
    border: none;
    padding: 0;
    margin: 0;
    border-radius: 0;
    min-width: 0;
}

select {
    appearance: none;
    height: 18px;
    padding: 0 20px 0 6px;
    color: #a8a8a8;
    border: 1px solid #2c2c2c;
    background: #1c1c1c url("data:image/svg+xml,%3Csvg xmlns='http://www.w3.org/2000/svg' width='10' height='10'%3E%3Cpath d='M1 3l4 4 4-4' fill='none' stroke='%23999' stroke-width='1.200'/%3E%3C/svg%3E") no-repeat right 4px center;
}

.value {
    color: #2f78bf;
}

.blue {
    color: #2f78bf;
}

.fx {
    font-family: "Liberation Serif", serif;
    font-style: italic;
    font-size: 15px;
    color: #c0c0c0;
    text-align: center;
}

.menu-icon {
    width: 9px;
    height: 10px;
}

.swatch {
    width: 11px;
    height: 11px;
}

.swatch.red {
    background-color: #b94a3c;
}

.swatch.tan {
    background-color: #ab9878;
}

.check {
    display: flex;
    align-items: center;
    gap: 4px;
}

.check input {
    appearance: none;
    width: 14px;
    height: 14px;
    border: 2px solid #8a8a8a;
}

/* 标题栏和菜单 */
.titlebar {
    display: flex;
    align-items: center;
    height: 23px;
    padding-left: 4px;
    background-color: #fff;
    color: #000;
    font-size: 12px;
}

.app-logo {
    width: 14px;
    height: 13px;
    margin-right: 6px;
    background-color: #1f0a3c;
    color: #b9a0f0;
    font-size: 9px;
    line-height: 13px;
    text-align: center;
}

.app-title {
    flex: 1;
}

.win-buttons {
    display: flex;
    gap: 1px;
    padding-right: 2px;
}

.win-buttons button {
    display: flex;
    justify-content: center;
    width: 45px;
}

.win-buttons svg {
    width: 12px;
    height: 12px;
}

.menubar {
    display: flex;
    gap: 10px;
    height: 20px;
    padding-left: 6px;
    background-color: #fff;
    color: #222;
    font-size: 12px;
    line-height: 19px;
}

/* 工具栏 */
.toolbar {
    display: flex;
    align-items: center;
    height: 26px;
    padding: 0 4px 0 10px;
    margin-bottom: 1px;
    background-color: #232323;
}

.tool {
    display: flex;
    align-items: center;
    justify-content: center;
    width: 25px;
    height: 22px;
    color: #b4b4b4;
}

.tool svg {
    width: 19px;
    height: 17px;
}

.tool.active {
    background-color: #161616;
    color: #2f87e0;
}

.tool.small svg {
    width: 15px;
    height: 15px;
}

.tool.blue {
    color: #2f78bf;
}

.type-tool {
    font-family: "Liberation Serif", serif;
    font-size: 20px;
    font-weight: bold;
}

.sep {
    width: 1px;
    height: 22px;
    margin: 0 3px;
    background-color: #1a1a1a;
}

.axis-tools {
    display: flex;
    height: 26px;
    align-items: center;
    margin-left: 24px;
    padding: 0 10px 0 18px;
    border-left: 2px solid #2e2e2e;
}

.axis-tools .tool {
    color: #3a3a3a;
}

.axis-tools .on {
    color: #1e3b55;
    background-color: #1c2126;
}

.snap {
    margin-right: 24px;
}

.workspaces {
    display: flex;
    gap: 46px;
    margin-left: auto;
    margin-right: 38px;
}

.workspaces .current {
    display: flex;
    align-items: center;
    gap: 15px;
    margin-right: -23px;
    color: #2f78bf;
}

.more {
    color: #b4b4b4;
    width: 27px;
}

.more svg {
    width: 12px;
    height: 11px;
}

.sync svg {
    width: 20px;
    height: 13px;
}

.help-search {
    display: flex;
    align-items: center;
    gap: 8px;
    width: 193px;
    height: 18px;
    margin-left: 13px;
    padding-left: 5px;
    background-color: #161616;
    font-size: 12px;
}

.help-search svg {
    width: 14px;
    height: 14px;
    color: #b4b4b4;
}

.help-search input {
    flex: 1;
}

.help-search input::placeholder {
    color: #8c8c8c;
}

/* 工作区 */
.workspace {
    flex: 1;
    display: grid;
    grid-template-columns: 321px 1fr 219px;
    gap: 4px;
    min-height: 0;
    padding-left: 2px;
    margin-bottom: 5px;
}

.panel {
    display: flex;
    flex-direction: column;
    background-color: #232323;
    min-width: 0;
}

.tabs {
    display: flex;
    height: 27px;
}

.tab {
    display: flex;
    align-items: center;
    height: 27px;
}

.tab.current {
    border-bottom: 2px solid #b4b4b4;
}

.tab b {
    font-weight: normal;
    color: #2f78bf;
}

.close {
    width: 15px;
}

.lock {
    width: 13px;
    height: 13px;
    margin-left: 8px;
    margin-right: 8px;
    color: #b4b4b4;
}

.tab .menu-icon {
    margin-left: 9px;
    color: #a0a0a0;
}

.tw {
    width: 9px;
    height: 9px;
}

.effects {
    border: 1px solid #2b5a86;
}

.effects .tabs {
    height: 26px;
}

.effects .tab {
    height: 26px;
}

.project-tab {
    width: 78px;
    padding-left: 12px;
}

.crumb {
    height: 22px;
    padding-top: 3px;
    padding-left: 4px;
    border-bottom: 1px solid #161616;
    font-size: 12px;
}

.effect-row {
    display: grid;
    align-items: center;
    height: 19px;
    margin-right: 15px;
    font-size: 11px;
}

.effect-row.head {
    grid-template-columns: 12px 19px 1fr 127px;
    height: 20px;
    padding-left: 4px;
    background-color: #303030;
    border-bottom: 1px solid #1c1c1c;
}

.effect-row.prop {
    grid-template-columns: 18px 18px 1fr 127px;
    padding-left: 23px;
    background-color: #262626;
}

.effect-row .value {
    text-align: left;
}

.prop .value, .position, .position .value {
    font-family: "Liberation Serif", serif;
    font-size: 12px;
}

.effect-name {
    justify-self: start;
    width: 57px;
    height: 18px;
    padding-left: 4px;
    background-color: #a0a0a0;
    color: #222;
}

.watch {
    width: 14px;
    height: 14px;
    color: #a0a0a0;
}

/* 合成查看器 */
.viewer .tabs {
    padding-left: 11px;
    gap: 39px;
}

.viewer .tab:nth-child(3) {
    margin-left: 32px;
}

.comp-path {
    height: 27px;
    padding: 5px 20px;
    border-bottom: 1px solid #161616;
}

.comp-path a {
    display: block;
    width: 84px;
    padding-left: 10px;
    line-height: 16px;
    background-color: #161616;
    color: #2f78bf;
}

.stage {
    position: relative;
    flex: 1;
    display: flex;
    align-items: center;
    justify-content: center;
    padding-right: 2px;
    overflow: hidden;
}

.comp {
    width: 533px;
    height: 400px;
}

.cursor {
    position: absolute;
    left: 15%;
    top: 39%;
    width: 60px;
    height: 60px;
}

.viewer-bar {
    display: flex;
    align-items: center;
    gap: 4px;
    height: 24px;
    padding-left: 4px;
    border-top: 1px solid #111;
    color: #b4b4b4;
    font-size: 12px;
}

.viewer-bar svg {
    width: 16px;
    height: 14px;
}

.viewer-bar .wide {
    width: 18px;
}

.viewer-bar .blue {
    color: #2f78bf;
    background-color: #161616;
}

.viewer-bar .dim {
    color: #444;
}

.viewer-bar .sep {
    margin: 0;
}

.viewer-bar select {
    margin-left: 1px;
}

.s-zoom {
    width: 67px;
}

.s-res {
    width: 86px;
}

.s-cam {
    width: 106px;
}

.s-view {
    width: 69px;
}

.viewer-bar .s-view ~ svg {
    margin-right: 1px;
}

.timecode {
    width: 69px;
    height: 18px;
    border: 1px solid #2c2c2c;
    color: #8c8c8c;
}

/* 右侧面板 */
.side {
    display: grid;
    grid-template-columns: 1fr 15px;
    min-height: 0;
    background-color: #1d1d1d;
}

.side-list {
    display: flex;
    flex-direction: column;
}

.side-item {
    height: 30px;
    padding: 5px 13px;
    background-color: #232323;
    border-bottom: 2px solid #181818;
}

.side-item:last-child {
    flex: 0 0 34px;
}

.scrollbar {
    padding: 1px 2px 27px 4px;
}

.scrollbar i {
    display: block;
    height: 100%;
    border-radius: 4px;
    background-color: #333;
}

.character {
    flex: 1;
    padding: 0 6px;
    background-color: #232323;
    border-bottom: 2px solid #181818;
}

.character h3 {
    display: flex;
    align-items: center;
    justify-content: space-between;
    height: 29px;
    padding: 0 6px 0 7px;
}

.font-row {
    display: grid;
    grid-template-columns: 120px 20px 44px;
    gap: 5px;
    height: 56px;
    padding-top: 7px;
    border-bottom: 1px solid #1a1a1a;
}

.font-selects, .font-icons {
    display: flex;
    flex-direction: column;
    gap: 6px;
}

.font-selects select {
    padding-right: 18px;
}

.font-icons svg {
    width: 20px;
    height: 18px;
}

.colors {
    width: 44px;
    height: 43px;
}

.char-grid {
    display: grid;
    grid-template-columns: 86px 107px;
    row-gap: 2px;
    padding: 4px 0 5px;
    border-bottom: 1px solid #1a1a1a;
}

.char-grid.stroke {
    padding: 5px 0 6px;
    align-items: center;
}

.field {
    display: flex;
    align-items: center;
    gap: 4px;
    height: 19px;
    font-size: 12px;
    white-space: nowrap;
}

.field:nth-child(even) {
    padding-left: 18px;
}

.field .pic, .field .glyph {
    flex: none;
    width: 19px;
    height: 18px;
    color: #b4b4b4;
}

.field .glyph {
    font-family: "Liberation Serif", "Noto Sans CJK SC", serif;
    font-size: 17px;
    font-weight: bold;
    text-align: center;
}

.glyph small {
    font-size: 12px;
}

.field .under {
    height: 17px;
    border-bottom: 1px solid #b4b4b4;
}

.field .tsume {
    font-size: 11px;
    font-weight: normal;
}

.field .off {
    color: #3f3f3f;
}

.tri {
    width: 8px;
    height: 8px;
    margin-left: auto;
    color: #b4b4b4;
}

.stroke select {
    margin-left: 4px;
    padding: 0 14px 0 4px;
    background-position: right 2px center;
}

.faux {
    display: flex;
    justify-content: space-between;
    padding: 7px 22px 0 26px;
    color: #b4b4b4;
    font-family: "Liberation Serif", serif;
    font-weight: bold;
    font-size: 15px;
}

.faux small, .faux sup, .faux sub {
    font-size: 9px;
    line-height: 9px;
}

.char-checks {
    display: grid;
    grid-template-columns: 98px 1fr;
    padding: 8px 5px;
}

/* 时间轴 */
.timeline {
    display: grid;
    grid-template-columns: 979px 1fr 18px;
    padding-left: 2px;
    background-color: #232323;
}

.layers {
    display: flex;
    flex-direction: column;
    border-right: 1px solid #161616;
}

.tl-tab {
    display: flex;
    align-items: center;
    height: 26px;
    padding-left: 11px;
    color: #a0a0a0;
}

.tl-tab .swatch {
    margin-right: 11px;
}

.tl-tab .menu-icon {
    margin-left: 12px;
}

.tl-top {
    display: grid;
    grid-template-columns: 123px 652px 1fr;
    align-items: center;
    height: 36px;
}

.now {
    display: flex;
    flex-direction: column;
    padding-top: 2px;
    padding-left: 12px;
    color: #1f4468;
    font-family: "Liberation Serif", serif;
    font-size: 12px;
    line-height: 14px;
}

.now strong {
    padding-left: 12px;
    color: #3a86d0;
    font-family: "Open Sans", sans-serif;
    font-weight: 600;
    font-size: 14px;
    line-height: 18px;
}

.tl-search {
    display: flex;
    align-items: center;
    height: 18px;
    padding-left: 7px;
    background-color: #161616;
    color: #b4b4b4;
}

.tl-search svg {
    width: 12px;
    height: 12px;
    margin: 0;
}

.tl-search .tri {
    width: 6px;
    height: 6px;
}

.tl-search input {
    flex: 1;
}

.tl-buttons {
    display: flex;
    justify-content: space-between;
    padding: 0 15px 0 17px;
    color: #b4b4b4;
}

.tl-buttons svg {
    width: 17px;
    height: 16px;
}

.row {
    display: grid;
    grid-template-columns: 68px 32px 33px 362px 137px 166px 1fr;
    align-items: center;
    height: 20px;
    border-bottom: 1px solid #191919;
}

.row.head {
    background-color: #333;
    border-top: 1px solid #191919;
}

.row.head > div {
    border-right: 1px solid #1c1c1c;
}

.row.head > .parent {
    margin-right: 14px;
}

.row.layer {
    height: 19px;
    background-color: #464646;
    color: #c0c0c0;
}

.row .av, .row .switches {
    display: flex;
    align-items: center;
    gap: 1px;
    height: 18px;
    padding-left: 5px;
    color: #b4b4b4;
}

.av > *, .switches > * {
    flex: none;
    width: 14px;
    height: 14px;
    line-height: 14px;
}

.cell {
    background-color: #333;
}

.row .label {
    display: flex;
    align-items: center;
    justify-content: flex-end;
    height: 18px;
    padding-right: 4px;
    gap: 5px;
    color: #b4b4b4;
}

.label svg {
    width: 14px;
    height: 14px;
}

.label .tw {
    width: 9px;
    height: 9px;
}

.layer .label {
    padding-right: 0;
}

.layer .label .swatch {
    width: 15px;
    height: 15px;
}

.row .num {
    padding-left: 7px;
    font-size: 12px;
}

.head .name {
    padding-left: 7px;
}

.layer .name {
    display: flex;
    align-items: center;
    gap: 3px;
    padding-left: 3px;
}

.solid {
    width: 16px;
    height: 16px;
    background-color: #fff;
}

.name input {
    flex: 1;
    height: 18px;
    padding-left: 1px;
    border: 2px solid #a8a8a8;
    font-size: 12px;
}

.row .mode {
    display: flex;
    align-items: center;
    gap: 10px;
    padding-left: 7px;
}

.mode span:nth-child(2) {
    margin-left: 40px;
}

.layer .mode {
    gap: 5px;
    padding-left: 3px;
}

.mode select {
    width: 70px;
}

.mode .cell {
    width: 13px;
    height: 13px;
}

.row .parent {
    display: flex;
    align-items: center;
    gap: 4px;
    padding-left: 6px;
}

.parent select {
    width: 137px;
}

.parent svg, .pick svg, .prop-name svg {
    width: 14px;
    height: 14px;
    color: #b4b4b4;
}

.row.sub {
    height: 20px;
    grid-template-columns: 129px 366px 137px 166px 1fr;
    background-color: #262626;
    border-color: #202020;
    font-size: 11px;
}

.row.effect-group {
    display: flex;
    gap: 12px;
    padding-left: 92px;
}

.keys {
    display: flex;
    gap: 7px;
    padding-left: 7px;
    font-family: "DejaVu Sans", sans-serif;
    font-size: 11px;
    color: #b4b4b4;
}

.prop-name {
    display: flex;
    align-items: center;
    gap: 5px;
}

.prop-name .blue {
    color: #2f78bf;
}

.position {
    padding-left: 6px;
}

.pick {
    padding-left: 18px;
}

.rest {
    flex: 1;
    min-height: 121px;
}

.tl-bottom {
    display: flex;
    align-items: center;
    justify-content: space-between;
    height: 18px;
    padding: 0 2px 0 6px;
    border-top: 1px solid #111;
}

.toggles {
    display: flex;
    gap: 4px;
    color: #2f78bf;
}

.toggles svg {
    width: 14px;
    height: 13px;
}

.toggles .grey {
    color: #999;
}

.site {
    display: flex;
    align-items: center;
    height: 30px;
    padding-bottom: 14px;
    color: #6a6a6a;
    font-size: 12px;
    font-weight: 600;
}

.site svg {
    width: 20px;
    height: 18px;
}

.tracks {
    position: relative;
    display: flex;
    flex-direction: column;
    min-width: 0;
    padding-top: 33px;
}

.navigator, .workarea {
    display: flex;
    justify-content: space-between;
    height: 8px;
    background-color: #666;
}

.workarea {
    height: 14px;
    background-color: #5f5f5f;
}

.navigator i, .workarea i {
    width: 7px;
    background-color: #2f80d0;
    border-radius: 5px 0 0 5px;
}

.navigator i:last-child, .workarea i:last-child {
    border-radius: 0 5px 5px 0;
}

.ruler {
    height: 21px;
    padding: 0 7px 0 8px;
    overflow: hidden;
}

.ticks {
    display: flex;
    margin: 0 calc(-100% / 24);
}

.ticks span {
    flex: 1 1 0;
    text-align: center;
    font-family: "Liberation Serif", serif;
    font-size: 12px;
    line-height: 16px;
}

.ticks span:first-child {
    text-indent: 8px;
}

.ticks span::after {
    content: "";
    display: block;
    width: 1px;
    height: 5px;
    margin: 0 auto;
    background-color: #777;
}

.cache {
    height: 6px;
    margin: 0 7px 0 8px;
    background-color: #2c8a38;
    border: solid #111;
    border-width: 2px 0 1px;
}

.track {
    height: 20px;
    padding: 0 7px 0 8px;
    background-color: #323232;
    border-bottom: 1px solid #222;
}

.bar-track {
    height: 19px;
    padding-top: 2px;
    background-color: #464646;
}

.bar {
    height: 15px;
    background-color: #b15247;
    border-left: 1px solid #ccc;
}

.keyframes {
    display: flex;
    align-items: center;
    justify-content: space-between;
    padding: 0 2px 0 3px;
}

.keyframes svg {
    width: 10px;
    height: 10px;
}

.track-rest {
    flex: 1;
    margin-right: 7px;
    background-color: #323232;
}

.zoom-bar {
    display: flex;
    align-items: center;
    gap: 12px;
    height: 18px;
    padding-left: 4px;
    border-top: 1px solid #111;
}

.zoom-bar svg {
    width: 10px;
    height: 8px;
}

.zoom-bar .big {
    width: 16px;
    height: 10px;
}

.zoom-bar input {
    appearance: none;
    width: 50px;
    height: 10px;
    background: linear-gradient(#555, #555) no-repeat center / 100% 1px;
}

.zoom-bar input::-webkit-slider-thumb {
    appearance: none;
    width: 9px;
    height: 9px;
    border: 2px solid #aaa;
    border-radius: 50%;
    background-color: #232323;
}

.playhead {
    position: absolute;
    top: 47px;
    bottom: 18px;
    left: calc(8px + (100% - 15px) / 60 - 6px);
    width: 12px;
    background: linear-gradient(#2f6da8, #2f6da8) no-repeat center / 2px 100%;
}

/* 当前帧的浅色条 */
.playhead::before {
    content: "";
    position: absolute;
    left: -9px;
    top: 54px;
    bottom: 0;
    width: 30px;
    background-color: rgba(255, 255, 255, 0.1);
}

.playhead svg {
    width: 12px;
    height: 14px;
}

.playhead .ibeam {
    margin-top: 43px;
}

.gutter {
    display: flex;
    flex-direction: column;
    gap: 5px;
    padding: 63px 1px 0 3px;
}

.gutter svg {
    width: 14px;
    height: 16px;
}

/* 角标与字幕 */
.brand, .promo, .subtitle {
    position: absolute;
    color: #fff;
    font-family: "Noto Sans CJK SC", sans-serif;
    font-weight: 300;
}

.brand {
    left: 55px;
    bottom: 38px;
    display: flex;
    align-items: flex-start;
    gap: 10px;
}

.brand-logo {
    width: 102px;
    height: 100px;
}

.brand-text {
    width: 417px;
}

.brand-top {
    display: flex;
    align-items: flex-end;
    justify-content: space-between;
    height: 59px;
    padding-bottom: 15px;
    border-bottom: 5px solid #fff;
}

.brand-name, .brand-motto, .brand-since, .promo p, .promo b {
    text-align: justify;
    text-align-last: justify;
}

.brand-name {
    width: 266px;
    font-size: 36px;
    line-height: 42px;
}

.brand-motto {
    width: 114px;
    font-size: 27px;
    line-height: 28px;
}

.brand-since {
    padding-top: 12px;
    font-size: 26px;
    line-height: 29px;
}

.promo {
    right: 55px;
    bottom: 34px;
    width: 429px;
    font-size: 26px;
}

.promo p {
    line-height: 32px;
}

.promo-name {
    display: flex;
    justify-content: center;
    height: 37px;
    margin: 4px 0 1px;
    padding-right: 8px;
    background-color: #adadad;
    color: #b80004;
}

.promo-name b {
    width: 118px;
    font-size: 27px;
    font-weight: 900;
    line-height: 37px;
}

.promo .promo-store {
    display: flex;
    justify-content: space-between;
    line-height: 36px;
}

.promo-store b {
    width: 87px;
    font-weight: 900;
}

.promo-store .latin {
    width: auto;
    font-family: "Open Sans", sans-serif;
    font-size: 33px;
    font-weight: 700;
}

.promo-store span:last-child {
    width: 118px;
}

.subtitle {
    left: 0;
    right: 0;
    bottom: 48px;
    font-size: 59px;
    font-weight: 500;
    line-height: 70px;
    text-align: center;
    text-shadow: 0 0 4px #333, 4px 4px 3px #333, -4px 4px 3px #333, 4px -4px 3px #333, -4px -4px 3px #333;
}
```
